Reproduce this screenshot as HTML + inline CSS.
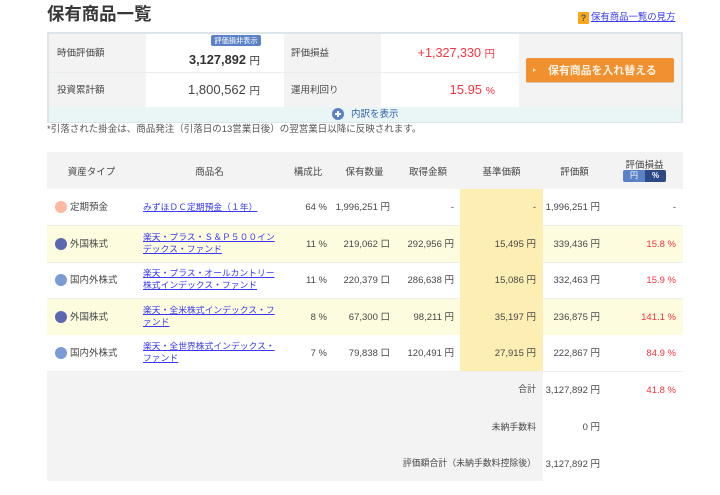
<!DOCTYPE html>
<html lang="ja"><head><meta charset="utf-8"><style>
html,body{margin:0;padding:0;width:720px;height:495px;overflow:hidden;background:#fff}
body{font-family:"Liberation Sans","Noto Sans CJK JP",sans-serif;color:#484848;font-size:9.5px;position:relative;filter:blur(.3px)}
.a{position:absolute;white-space:nowrap;line-height:12px}
.b{position:absolute}
.r{text-align:right}
.c{text-align:center}
.red{color:#f8333f}
a{color:#3a3af0;text-decoration:underline}
.dot{position:absolute;left:55px;width:12px;height:12px;border-radius:50%}
.n{position:absolute;left:143px;width:140px;line-height:12.2px;font-size:8.8px}
.t{font-size:8.9px}
</style></head><body>
<div class="a" style="left:47px;top:4px;font-size:17.4px;line-height:20px;font-weight:700;color:#383838">保有商品一覧</div>
<div class="b" style="left:578px;top:12px;width:11px;height:12px;background:#f7a81b;border-radius:1px;color:#555;font-size:9px;line-height:12px;text-align:center;font-weight:bold">?</div>
<a class="a" style="left:591px;top:11px;font-size:9.4px" href="#">保有商品一覧の見方</a>

<div class="b" style="left:47px;top:32px;width:636px;height:91px;background:#dce6ea"></div>
<div class="b" style="left:49px;top:34px;width:632px;height:73px;background:#f3f3f3"></div>
<div class="b" style="left:146px;top:34px;width:138px;height:73px;background:#fff"></div>
<div class="b" style="left:381px;top:34px;width:138px;height:73px;background:#fff"></div>
<div class="b" style="left:49px;top:72px;width:470px;height:1px;background:#e8eeee"></div>
<div class="b" style="left:49px;top:107px;width:632px;height:15px;background:#eaf5f6"></div>

<div class="a" style="left:57px;top:48px">時価評価額</div>
<div class="a" style="left:57px;top:85px">投資累計額</div>
<div class="a" style="left:291px;top:48px">評価損益</div>
<div class="a" style="left:291px;top:85px">運用利回り</div>

<div class="b" style="left:211px;top:35px;width:50px;height:11px;background:#5b82c6;border-radius:2px;color:#fff;font-size:7.2px;line-height:11px;text-align:center">評価損非表示</div>
<div class="a r" style="left:146px;width:114px;top:54px;font-size:12.8px;font-weight:bold;color:#333">3,127,892 <span style="font-weight:normal;font-size:10.5px">円</span></div>
<div class="a r" style="left:146px;width:114px;top:84px;font-size:13px;color:#444">1,800,562 <span style="font-size:10.5px">円</span></div>
<div class="a r" style="left:381px;width:114px;top:47px;font-size:12.6px;color:#f8333f">+1,327,330 <span style="font-size:10.5px">円</span></div>
<div class="a r" style="left:381px;width:114px;top:84px;font-size:13px;color:#f8333f">15.95 <span style="font-size:10.5px">%</span></div>

<div class="b" style="left:526px;top:58px;width:148px;height:25px;background:#f0902f;border-radius:2px;border-bottom:1px solid #d9c4a8;box-sizing:border-box"></div>
<div class="b" style="left:533px;top:68px;width:0;height:0;border-left:3px solid #fbe3c8;border-top:2.5px solid transparent;border-bottom:2.5px solid transparent"></div>
<div class="a" style="left:548px;top:65px;font-size:10.9px;font-weight:700;color:#fdf1e3">保有商品を入れ替える</div>

<div class="b" style="left:332px;top:108px;width:12px;height:12px;border-radius:50%;background:#5b80c8"></div>
<div class="b" style="left:335px;top:113px;width:6px;height:2px;background:#fff"></div>
<div class="b" style="left:337px;top:111px;width:2px;height:6px;background:#fff"></div>
<div class="a" style="left:351px;top:109px;color:#2f5fa8;font-size:9.5px">内訳を表示</div>

<div class="a" style="left:47px;top:124px;color:#555;font-size:9.5px">*引落された掛金は、商品発注（引落日の13営業日後）の翌営業日以降に反映されます。</div>

<!-- table backgrounds -->
<div class="b" style="left:47px;top:152px;width:636px;height:37px;background:#f3f3f3"></div>
<div class="b" style="left:47px;top:225px;width:636px;height:37px;background:#fdfcdf"></div>
<div class="b" style="left:47px;top:298px;width:636px;height:37px;background:#fdfcdf"></div>
<div class="b" style="left:47px;top:225px;width:636px;height:1px;background:#eeeeee"></div>
<div class="b" style="left:47px;top:262px;width:636px;height:1px;background:#eeeeee"></div>
<div class="b" style="left:47px;top:298px;width:636px;height:1px;background:#eeeeee"></div>
<div class="b" style="left:47px;top:371px;width:636px;height:1px;background:#eeeeee"></div>
<div class="b" style="left:460px;top:189px;width:83px;height:182px;background:#fdeeb4"></div>
<div class="b" style="left:47px;top:372px;width:496px;height:109px;background:#f3f3f3"></div>

<!-- header -->
<div class="a c" style="left:47px;width:89px;top:167px">資産タイプ</div>
<div class="a c" style="left:136px;width:147px;top:167px">商品名</div>
<div class="a c" style="left:283px;width:50px;top:167px">構成比</div>
<div class="a c" style="left:333px;width:63px;top:167px">保有数量</div>
<div class="a c" style="left:396px;width:64px;top:167px">取得金額</div>
<div class="a c" style="left:460px;width:83px;top:167px">基準価額</div>
<div class="a c" style="left:543px;width:63px;top:167px">評価額</div>
<div class="a c" style="left:606px;width:77px;top:160px">評価損益</div>
<div class="b" style="left:623px;top:170px;width:22px;height:12px;background:#5b82c6;border-radius:2px 0 0 2px;color:#fff;font-size:8px;line-height:12px;text-align:center">円</div>
<div class="b" style="left:645px;top:170px;width:21px;height:12px;background:#2d4a85;border-radius:0 2px 2px 0;color:#fff;font-size:8px;line-height:12px;text-align:center;font-weight:bold">%</div>

<!-- row 1 -->
<div class="dot" style="top:201px;background:#fdb9a0"></div>
<div class="a" style="left:70px;top:202px">定期預金</div>
<a class="a" style="left:143px;top:201px;font-size:8.8px" href="#">みずほＤＣ定期預金（１年）</a>
<div class="a r" style="left:283px;width:44px;top:202px">64 %</div>
<div class="a r" style="left:333px;width:57px;top:202px">1,996,251 円</div>
<div class="a r" style="left:396px;width:58px;top:202px">-</div>
<div class="a r" style="left:460px;width:76px;top:202px">-</div>
<div class="a r" style="left:543px;width:57px;top:202px">1,996,251 円</div>
<div class="a r" style="left:606px;width:70px;top:202px">-</div>

<!-- row 2 -->
<div class="dot" style="top:238px;background:#5b68b0"></div>
<div class="a" style="left:70px;top:239px">外国株式</div>
<div class="n" style="top:231px"><a href="#">楽天・プラス・Ｓ＆Ｐ５００イン<br>デックス・ファンド</a></div>
<div class="a r" style="left:283px;width:44px;top:239px">11 %</div>
<div class="a r" style="left:333px;width:57px;top:239px">219,062 口</div>
<div class="a r" style="left:396px;width:58px;top:239px">292,956 円</div>
<div class="a r" style="left:460px;width:76px;top:239px">15,495 円</div>
<div class="a r" style="left:543px;width:57px;top:239px">339,436 円</div>
<div class="a r red" style="left:606px;width:70px;top:239px">15.8 %</div>

<!-- row 3 -->
<div class="dot" style="top:274px;background:#7b9bd6"></div>
<div class="a" style="left:70px;top:275px">国内外株式</div>
<div class="n" style="top:267px"><a href="#">楽天・プラス・オールカントリー<br>株式インデックス・ファンド</a></div>
<div class="a r" style="left:283px;width:44px;top:275px">11 %</div>
<div class="a r" style="left:333px;width:57px;top:275px">220,379 口</div>
<div class="a r" style="left:396px;width:58px;top:275px">286,638 円</div>
<div class="a r" style="left:460px;width:76px;top:275px">15,086 円</div>
<div class="a r" style="left:543px;width:57px;top:275px">332,463 円</div>
<div class="a r red" style="left:606px;width:70px;top:275px">15.9 %</div>

<!-- row 4 -->
<div class="dot" style="top:311px;background:#5b68b0"></div>
<div class="a" style="left:70px;top:312px">外国株式</div>
<div class="n" style="top:304px"><a href="#">楽天・全米株式インデックス・フ<br>ァンド</a></div>
<div class="a r" style="left:283px;width:44px;top:312px">8 %</div>
<div class="a r" style="left:333px;width:57px;top:312px">67,300 口</div>
<div class="a r" style="left:396px;width:58px;top:312px">98,211 円</div>
<div class="a r" style="left:460px;width:76px;top:312px">35,197 円</div>
<div class="a r" style="left:543px;width:57px;top:312px">236,875 円</div>
<div class="a r red" style="left:606px;width:70px;top:312px">141.1 %</div>

<!-- row 5 -->
<div class="dot" style="top:347px;background:#7b9bd6"></div>
<div class="a" style="left:70px;top:348px">国内外株式</div>
<div class="n" style="top:340px"><a href="#">楽天・全世界株式インデックス・<br>ファンド</a></div>
<div class="a r" style="left:283px;width:44px;top:348px">7 %</div>
<div class="a r" style="left:333px;width:57px;top:348px">79,838 口</div>
<div class="a r" style="left:396px;width:58px;top:348px">120,491 円</div>
<div class="a r" style="left:460px;width:76px;top:348px">27,915 円</div>
<div class="a r" style="left:543px;width:57px;top:348px">222,867 円</div>
<div class="a r red" style="left:606px;width:70px;top:348px">84.9 %</div>

<!-- totals -->
<div class="a r t" style="left:336px;width:200px;top:383px">合計</div>
<div class="a r" style="left:543px;width:57px;top:385px">3,127,892 円</div>
<div class="a r red" style="left:606px;width:70px;top:385px">41.8 %</div>
<div class="a r t" style="left:336px;width:200px;top:421px">未納手数料</div>
<div class="a r" style="left:543px;width:57px;top:422px">0 円</div>
<div class="a r t" style="left:336px;width:200px;top:457px">評価額合計（未納手数料控除後）</div>
<div class="a r" style="left:543px;width:57px;top:459px">3,127,892 円</div>
</body></html>
